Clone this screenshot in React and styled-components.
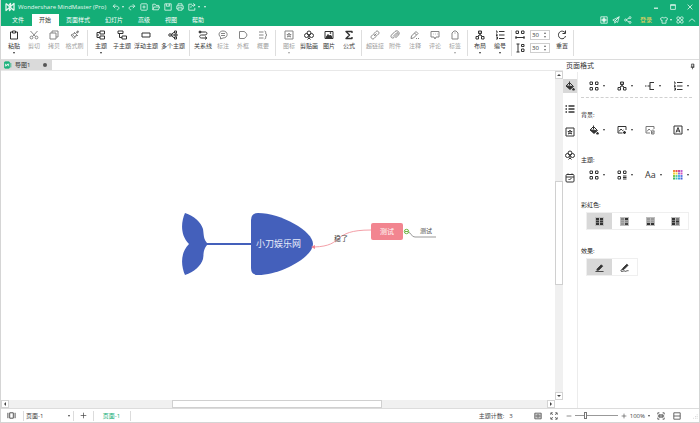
import React, { useState } from 'react';
import styled, { createGlobalStyle } from 'styled-components';

const GlobalStyle = createGlobalStyle`
  * {
    box-sizing: border-box;
  }

  body {
    margin: 0;
    background: #fff;
    color: #333;
    font-family: "Open Sans", "Noto Sans CJK SC", sans-serif;
    font-size: 6px;
    line-height: 8px;
  }

  button, input, select {
    margin: 0;
    padding: 0;
    border: 0;
    background: none;
    color: inherit;
    font: inherit;
  }

  svg {
    display: block;
    flex: none;
  }
`;

// All icons are drawn on a 20 x 20 grid
const icons = {
  logo: <path d="M2 3v14l7-6v6l3-3M18 17V3l-7 6V3L8 6M2 3l16 14" strokeWidth="2.6" />,
  undo: <path d="M8 3 3 8l5 5M3 8h8c8 0 8 9 1 9" />,
  redo: <path d="m12 3 5 5-5 5M17 8H9c-8 0-8 9-1 9" />,
  newFile: <><rect x="2" y="2" width="16" height="16" rx="2" /><path d="M10 6v8M6 10h8" /></>,
  open: <path d="M2 17V3h6l2 3h7v4M2 17l3-7h14l-3 7z" />,
  save: <path d="M2 2h16v16H2zM6 2v6h8V2M11 4v2" />,
  print: <><path d="M5 7V2h10v5M5 15H2V7h16v8h-3" /><path d="M5 12h10v6H5z" /></>,
  exportFile: <path d="M10 3H2v15h15v-6M7 12c0-5 4-7 10-7M13 1l5 4-5 4" />,
  minimize: <path d="M5 13h10" strokeWidth="3" />,
  maximize: <path d="M4 4h12v12H4zM4 6h12" />,
  close: <path d="m4 4 12 12M16 4 4 16" />,
  gift: <><rect x="2" y="2" width="16" height="16" /><path d="M10 2v16M2 10h16" /><rect x="7" y="7" width="6" height="6" fill="currentColor" /></>,
  send: <path d="M18 2 2 10l5 3zM7 13l11-11-4 14-5-3M7 13v5l3-4" />,
  share: <><circle cx="4" cy="10" r="2.5" /><circle cx="15" cy="4" r="2.5" /><circle cx="15" cy="16" r="2.5" /><path d="m6 9 7-4M6 11l7 4" /></>,
  shirt: <path d="M7 3 1 6l2 5 2-1v8h10v-8l2 1 2-5-6-3c-1 3-5 3-6 0z" />,
  apps: <><circle cx="5.5" cy="5.5" r="3.5" /><circle cx="14.5" cy="5.5" r="3.5" /><circle cx="5.5" cy="14.5" r="3.5" /><circle cx="14.5" cy="14.5" r="3.5" /></>,
  chevronUp: <path d="m2 14 8-7 8 7" />,
  paste: <><path d="M7 4H3v14h14V4h-4" /><path d="M7 2h6v4H7z" /></>,
  cut: <><circle cx="5" cy="15" r="2.8" /><circle cx="15" cy="15" r="2.8" /><path d="M3 2l10 11M17 2 7 13" /></>,
  copy: <path d="M6 6V2h12v12h-4M2 6h12v12H2z" />,
  brush: <><path d="m13 6 4-4" strokeWidth="4" /><path d="m8 4 8 8M10 6 2 10l6 7 6-7M5 12l3-2M8 14l3-3" /></>,
  topic: <><rect x="8" y="2" width="9" height="6" /><rect x="8" y="12" width="9" height="6" /><path d="M8 5H2v10h6M2 10h4" /></>,
  subtopic: <><rect x="2" y="2" width="10" height="5" /><rect x="10" y="12" width="9" height="6" /><path d="M5 7v8h5" /></>,
  floating: <rect x="2" y="6" width="16" height="8" />,
  multi: <><circle cx="4" cy="10" r="2.5" /><rect x="13" y="2" width="4" height="4" /><rect x="14" y="8" width="4" height="4" /><rect x="13" y="14" width="4" height="4" /><path d="m6 9 7-5M6 10h8M6 11l7 5" /></>,
  relation: <><path d="M5 4h10c4 0 4 6-1 6H7c-5 0-5 6 0 6h9" /><path d="m14 13 4 3-4 3" /><circle cx="4" cy="4" r="2" fill="currentColor" /></>,
  callout: <><path d="M10 2c11 0 11 14 0 14l-5 2v-4C-1 9 3 2 10 2z" /><path d="M6 7h8M6 11h8" /></>,
  boundary: <path d="M3 3h9c3 1 5 4 6 7-1 3-3 6-6 7H3z" />,
  summary: <path d="M2 4h9M2 10h9M2 16h9M13 2c5 0 0 7 5 8-5 1 0 8-5 8" />,
  mark: <><rect x="2" y="2" width="16" height="16" /><path d="m10 6 1 3h3l-2 2 1 3-3-2-3 2 1-3-2-2h3z" /></>,
  clipart: <><circle cx="10" cy="6" r="4" /><circle cx="5" cy="11" r="4" /><circle cx="15" cy="11" r="4" /><path d="M10 9v7l3 3M10 16l-3 3" /></>,
  picture: <><path d="M2 3h16v14H2z" /><path d="m4 15 4-6 3 3 2-2 3 5z" fill="currentColor" /><circle cx="13" cy="6" r="1" /></>,
  formula: <path d="M16 6V3H4l7 7-7 7h12v-3" strokeWidth="2.8" />,
  link: <path d="m8 12 5-5M9 6l3-3c3-3 8 2 5 5l-3 3c-2 2-4 1-5 0M11 14l-3 3c-3 3-8-2-5-5l3-3c2-2 4-1 5 0" />,
  attach: <path d="m6 13 7-7c2-2 4 0 2 2l-7 7c-4 3-8-1-5-5l7-7c5-4 11 2 7 7l-6 6" />,
  note: <path d="m12 3 4 4-9 9-5 1 1-5zM9 6l4 4M12 17h2M16 17h2" />,
  comment: <path d="M2 3h16v11h-6l-2 4-2-4H2zM6 8h1M10 8h1M14 8h1" />,
  tag: <><path d="M4 18V6l4-4h4l4 4v12z" /><path d="M9 6h2" /></>,
  layout: <><path d="M10 8v3M5 14l3-4h4l3 4" /><rect x="7" y="2" width="6" height="5" fill="currentColor" fillOpacity=".3" /><rect x="2" y="13" width="5" height="5" /><rect x="13" y="13" width="5" height="5" /></>,
  numbering: <><path d="M8 3h11M8 10h11M8 17h11" strokeWidth="2.4" /><path d="M2 2h2v4M2 8h2v3H2h3M2 14h3v4H2" /></>,
  hSpace: <path d="M2 2h5v5H2zM13 2h5v5h-5zM1 15h18M2 12v6M18 12v6" />,
  vSpace: <path d="M3 2h6M3 18h6M6 2v16M13 3h5v4h-5zM13 12h5v5h-5z" />,
  reset: <path d="M16 5c-6-6-14-1-13 6 1 8 12 9 14 1M17 1v6h-6" />,
  bucket: <><path d="m9 3 8 8-7 6-8-7zM9 1v8" /><path d="m4 10 11 1-5 5zM17 14l2 4h-4z" fill="currentColor" /></>,
  bullets: <path d="M7 4h12M7 10h12M7 16h12M1 4h3M1 10h3M1 16h3" strokeWidth="2.6" />,
  task: <><rect x="2" y="3" width="16" height="15" rx="2" /><path d="M2 8h16M6 1v3M14 1v3M7 12l2 2 4-4" /></>,
  layoutGrid: <path d="M2 2h5v5H2zM13 2h5v5h-5zM2 13h5v5H2zM13 13h5v5h-5z" />,
  branch: <path d="M0 10h3M5 10h5M18 3h-8v14h8" strokeWidth="2.2" />,
  addPicture: <><path d="M18 10V3H2v13h9M4 13l4-5 3 3 2-1" /><path d="M15 12v6M12 15h6" strokeWidth="2.6" /></>,
  removePicture: <g opacity=".65"><path d="M18 8V3H2v13h8M4 13l4-5 3 3" /><path d="M12 12h7M13 12v6h5v-6M15 10h2M15.5 14v3" /></g>,
  watermark: <><path d="M2 2h16v16H2z" /><path d="m6 15 4-10 4 10M7 12h6" /></>,
  styleGrid: <path d="M2 2h5v5H2zM13 2h5v5h-5zM2 13h5v5H2zM12 12h7M12 15h7M12 18h7" />,
  pin: <path d="M7 3h7v9H7zM5 12h10M10 12v6M12 3v9" />,
  presentation: <path d="M6 4h8v12H6zM2 4v12M18 4v12" />,
  plus: <path d="M10 2v16M2 10h16" />,
  minus: <path d="M2 10h16" />,
  fitPage: <path d="M2 3h16v14H2zM5 6v8M15 6v8M8 7h4v6H8z" />,
  fullScreen: <path d="M7 2H2v5M13 2h5v5M7 18H2v-5M13 18h5v-5M3 3l4 4M17 3l-4 4M3 17l4-4M17 17l-4-4" />,
  focus: <path d="M2 6V2h4M14 2h4v4M2 14v4h4M14 18h4v-4M5 7h10v6H5zM2 10h16" />,
  collapse: <path d="M2 2h16v16H2zM2 10h16" />,
  marker: <><path d="m5 13 9-9 3 3-9 9H4z" fill="currentColor" /><path d="M1 19h18" /></>,
  sketch: <><path d="m6 12 9-9 3 2-9 9-5 1z" fill="currentColor" /><path d="M4 15c-5 3 0 5 3 3s5 2 7 0 4 0 5-1" /></>,
  doc: <><rect x="1" y="2" width="13" height="16" rx="2" fill="#1bb27c" stroke="#1bb27c" /><path d="M17 5v11" stroke="#1bb27c" /><path d="M4 7v6l3-3v3M11 13V7l-3 3V7" stroke="#fff" /></>,
  grip: <path d="M15 3h3M15 10h3M8 10h3M15 17h3M8 17h3M1 17h3" strokeWidth="3" />,
};

const Icon = ({ name, size = 10 }) => (
  <svg
    width={size}
    height={size}
    viewBox="0 0 20 20"
    fill="none"
    stroke="currentColor"
    strokeWidth="2"
    strokeLinejoin="round"
    aria-hidden="true"
  >
    {icons[name]}
  </svg>
);

const Window = styled.div`
  display: flex;
  flex-direction: column;
  height: 100vh;
  border: 1px solid #d5d5d5;
  border-top: 0;
  overflow: hidden;
`;

const Header = styled.header`
  flex: none;
  margin: 0 -1px;
  background: #14ae77;
  color: #e5f7f0;
`;

const TitleBar = styled.div`
  display: flex;
  align-items: center;
  height: 14px;
  padding: 0 6px 0 5px;
`;

const AppTitle = styled.h1`
  margin: 0 6px 0 3px;
  font-size: 6px;
  font-weight: 400;
`;

const QuickTools = styled.div`
  display: flex;
  align-items: center;
  gap: 4px;
`;

const IconButton = styled.button`
  display: flex;
  align-items: center;
  justify-content: center;
  gap: ${(props) => props.$gap || 2}px;
  flex: none;
`;

const Caret = styled.span`
  flex: none;
  width: 0;
  height: 0;
  border: 1px solid transparent;
  border-top: 2px solid currentColor;
  border-bottom: 0;
`;

const WindowControls = styled.div`
  display: flex;
  gap: 9px;
  margin-left: auto;
`;

const MenuBar = styled.nav`
  display: flex;
  align-items: center;
  height: 12px;
  padding-left: 5px;
  padding-right: 4px;
`;

const MenuTab = styled.button`
  height: 12px;
  padding: 0 8px 0 7px;
  background: ${(props) => (props.$active ? '#fff' : 'transparent')};
  color: ${(props) => (props.$active ? '#333' : '#fff')};
  white-space: nowrap;
`;

const AccountTools = styled.div`
  display: flex;
  align-items: center;
  gap: 4px;
  margin-left: auto;
`;

const Login = styled.a`
  margin: 0 4px;
  color: #f4d35e;
  text-decoration: none;
`;

const Ribbon = styled.div`
  display: flex;
  flex: none;
  height: 34px;
  padding-top: 4px;
  border-bottom: 1px solid #dcdcdc;
`;

const RibbonGroup = styled.div`
  display: flex;
  height: 26px;
  padding: ${(props) => (props.$tight ? '0 1px 0 2px' : '0 2px 0 3px')};
  border-right: 1px solid #dedede;
`;

const ToolButton = styled.button`
  display: flex;
  flex-direction: column;
  align-items: center;
  width: ${(props) => props.$width || 20}px;
  color: #333;
  white-space: nowrap;

  &:disabled {
    color: #a0a0a0;
  }

  &:disabled svg {
    color: #858585;
  }
`;

const ToolLabel = styled.span`
  margin: 2px 0;
`;

const SpacingRows = styled.div`
  display: flex;
  flex-direction: column;
  gap: 3px;
  padding: 0 2px 0 1px;
`;

const SpacingField = styled.label`
  display: flex;
  align-items: center;
  gap: 5px;
`;

const SpinBox = styled.span`
  display: flex;
  align-items: center;
  width: 20px;
  height: 10px;
  padding: 0 3px 0 1px;
  border: 1px solid #cfcfcf;
`;

const SpinInput = styled.input`
  width: 100%;
  min-width: 0;
  outline: 0;
`;

const SpinArrows = styled.span`
  display: flex;
  flex-direction: column;
  gap: 2px;
  color: #666;

  ${Caret}:first-child {
    transform: rotate(180deg);
  }
`;

const Main = styled.main`
  display: flex;
  flex: 1;
  min-height: 0;
`;

const Workspace = styled.section`
  display: flex;
  flex: 1;
  flex-direction: column;
  min-width: 0;
`;

const DocTabs = styled.div`
  flex: none;
  height: 11px;
  border-bottom: 1px solid #e8e8e8;
`;

const DocTab = styled.button`
  display: flex;
  align-items: center;
  gap: 3px;
  width: 51px;
  height: 10px;
  padding: 0 5px 0 3px;
  background: #dadada;
`;

const Unsaved = styled.span`
  width: 4px;
  height: 4px;
  margin-left: auto;
  border-radius: 50%;
  background: #555;
`;

const CanvasRow = styled.div`
  display: flex;
  flex: 1;
  min-height: 0;
`;

const Canvas = styled.div`
  position: relative;
  flex: 1;
  overflow: hidden;
`;

const Stage = styled.div`
  position: absolute;
  top: 139px;
  left: 179px;
  width: 260px;
  height: 68px;
`;

const MapNode = styled.div`
  position: absolute;
  top: ${(props) => props.$y}px;
  left: ${(props) => props.$x}px;
  width: ${(props) => props.$width}px;
  color: ${(props) => props.$color || '#444'};
  font-size: ${(props) => props.$size || 6}px;
  line-height: ${(props) => props.$line || 8}px;
  text-align: center;
  white-space: nowrap;
  border-radius: 2px;
  background: ${(props) => props.$fill || 'transparent'};
`;

const ScrollTrack = styled.div`
  display: flex;
  flex: none;
  flex-direction: ${(props) => (props.$vertical ? 'column' : 'row')};
  ${(props) => (props.$vertical ? 'width: 8px;' : 'height: 8px; margin-right: 8px;')}
  background: #f0f0f0;
`;

const ScrollButton = styled.button`
  display: flex;
  align-items: center;
  justify-content: center;
  flex: none;
  width: 8px;
  height: 8px;
  border: 1px solid #d3d3d3;
  background: #fff;
  color: #444;

  span {
    border-width: 2px 2px 0;
    transform: rotate(${(props) => props.$turn}deg);
  }
`;

const ScrollGap = styled.div`
  flex: ${(props) => props.$grow};
`;

const ScrollThumb = styled.div`
  flex: ${(props) => props.$grow};
  border: 1px solid #d0d0d0;
  background: #fff;
`;

const Panel = styled.aside`
  display: flex;
  flex: none;
  flex-direction: column;
  width: 136px;
`;

const PanelHeader = styled.div`
  display: flex;
  align-items: center;
  justify-content: space-between;
  height: 12px;
  padding: 0 3px;
`;

const PanelTitle = styled.h2`
  margin: 0;
  font-size: 7px;
  font-weight: 400;
`;

const PanelBody = styled.div`
  display: flex;
  flex: 1;
  min-height: 0;
`;

const SideTabs = styled.div`
  display: flex;
  flex-direction: column;
  gap: 9px;
  width: 15px;
  padding-top: 7px;
  border-right: 1px solid #ececec;
`;

const SideTab = styled.button`
  display: flex;
  align-items: center;
  justify-content: center;
  height: 14px;
  background: ${(props) => (props.$active ? '#d8d8d8' : 'transparent')};
`;

const Settings = styled.div`
  flex: 1;
  padding: 8px 7px 0 3px;
`;

const OptionRow = styled.div`
  display: grid;
  grid-template-columns: 28px 28px 28px auto;
  align-items: center;
  justify-items: start;
  height: 12px;
  padding-left: 8px;
`;

const Divider = styled.hr`
  margin: 5px 0 0;
  border: 0;
  border-top: 1px dashed #d0d0d0;
`;

const SectionLabel = styled.h3`
  margin: ${(props) => props.$top}px 0 ${(props) => props.$bottom || 5}px;
  color: #222;
  font-size: 6px;
  font-weight: 400;
`;

const FontSample = styled.span`
  font-size: 9px;
  line-height: 12px;
`;

const Choices = styled.div`
  display: grid;
  grid-template-columns: repeat(${(props) => props.$count}, 1fr);
  width: ${(props) => props.$count * 25}%;
  border: 1px solid #efefef;
`;

const ChoiceArea = styled.div`
  padding: 0 3px 0 5px;
`;

const Choice = styled.button`
  display: flex;
  align-items: center;
  justify-content: center;
  height: 16px;
  background: ${(props) => (props.$active ? '#d8d8d8' : '#fff')};
`;

const StatusBar = styled.footer`
  display: flex;
  align-items: center;
  flex: none;
  height: 14px;
  border-top: 1px solid #dcdcdc;
  color: #444;
`;

const StatusCell = styled.div`
  display: flex;
  align-items: center;
  justify-content: center;
  width: ${(props) => props.$width}px;
  height: 10px;
  padding: 0 3px 0 2px;
  border-right: 1px solid #dcdcdc;
`;

const PageSelect = styled.select`
  flex: 1;
  appearance: none;
  outline: 0;
`;

const PageTab = styled.button`
  color: #14ae77;
`;

const StatusTools = styled.div`
  display: flex;
  align-items: center;
  margin-left: auto;
`;

const TopicCount = styled.span`
  display: flex;
  gap: 5px;
  margin-right: 21px;
`;

const ViewTools = styled.div`
  display: flex;
  gap: 8px;
  margin-right: 8px;
`;

const ZoomTools = styled.div`
  display: flex;
  align-items: center;
  gap: 3px;
  margin-right: 7px;
`;

const ZoomSlider = styled.input`
  width: 43px;
  height: 8px;
  appearance: none;

  &::-webkit-slider-runnable-track {
    height: 1px;
    background: #999;
  }

  &::-webkit-slider-thumb {
    width: 3px;
    height: 7px;
    margin-top: -3px;
    border: 1px solid #777;
    background: #fff;
    appearance: none;
  }
`;

const SizeGrip = styled.span`
  align-self: flex-end;
  margin: 0 1px 1px 4px;
  color: #bbb;
`;

const menuTabs = ['文件', '开始', '页面样式', '幻灯片', '高级', '视图', '帮助'];

const ribbonGroups = [
  [
    { label: '粘贴', icon: 'paste', menu: true },
    { label: '剪切', icon: 'cut', disabled: true },
    { label: '拷贝', icon: 'copy', disabled: true },
    { label: '格式刷', icon: 'brush', disabled: true, width: 21 },
  ],
  [
    { label: '主题', icon: 'topic', menu: true },
    { label: '子主题', icon: 'subtopic', width: 22 },
    { label: '浮动主题', icon: 'floating', width: 26 },
    { label: '多个主题', icon: 'multi', width: 28 },
  ],
  [
    { label: '关系线', icon: 'relation' },
    { label: '标注', icon: 'callout', disabled: true },
    { label: '外框', icon: 'boundary', disabled: true },
    { label: '概要', icon: 'summary', disabled: true },
  ],
  [
    { label: '图标', icon: 'mark', disabled: true, menu: true },
    { label: '剪贴画', icon: 'clipart' },
    { label: '图片', icon: 'picture' },
    { label: '公式', icon: 'formula' },
  ],
  [
    { label: '超链接', icon: 'link', disabled: true },
    { label: '附件', icon: 'attach', disabled: true },
    { label: '注释', icon: 'note', disabled: true },
    { label: '评论', icon: 'comment', disabled: true },
    { label: '标签', icon: 'tag', disabled: true, menu: true },
  ],
];

const sideTabs = [
  { label: '页面格式', icon: 'bucket' },
  { label: '大纲', icon: 'bullets' },
  { label: '图标', icon: 'mark' },
  { label: '剪贴画', icon: 'clipart' },
  { label: '任务', icon: 'task' },
];

const swatches = [
  '#f08a3c', '#e8544f', '#d24a9a', '#c05fd0',
  '#f5d03b', '#f5e04c', '#8d74dd', '#d45ac0',
  '#7ec850', '#5ccf9a', '#4fb4ee', '#5a7fe8',
  '#46b85a', '#42c8b8', '#3f9ae8', '#4660d8',
];

const rainbowModes = [
  ['#333', '#333', '#333', '#333', '#333', '#333'],
  ['#888', '#333', '#999', '#888', '#999', '#444'],
  ['#999', '#999', '#999', '#999', '#333', '#333'],
  ['#333', '#777', '#333', '#333', '#333', '#777'],
];

const Swatches = () => (
  <svg width="10" height="10" viewBox="0 0 20 20" aria-hidden="true">
    {swatches.map((color, i) => (
      <rect key={i} x={(i % 4) * 5} y={Math.floor(i / 4) * 5} width="4" height="4" fill={color} />
    ))}
  </svg>
);

const RainbowIcon = ({ colors }) => (
  <svg width="9" height="9" viewBox="0 0 18 18" aria-hidden="true">
    <rect width="18" height="18" fill="#bdbdbd" />
    {colors.map((color, i) => (
      <rect key={i} x={i % 2 ? 10 : 2} y={2 + Math.floor(i / 2) * 5} width="6" height="4" fill={color} />
    ))}
  </svg>
);

const Tool = ({ label, icon, menu, disabled, width }) => (
  <ToolButton disabled={disabled} $width={width}>
    <Icon name={icon} />
    <ToolLabel>{label}</ToolLabel>
    {menu && <Caret />}
  </ToolButton>
);

const Option = ({ icon, label, menu = true, children }) => (
  <IconButton aria-label={label} $gap={4}>
    {children || <Icon name={icon} />}
    {menu && <Caret />}
  </IconButton>
);

const Spacing = ({ icon, label }) => (
  <SpacingField>
    <Icon name={icon} />
    <SpinBox>
      <SpinInput aria-label={label} defaultValue="30" />
      <SpinArrows>
        <Caret />
        <Caret />
      </SpinArrows>
    </SpinBox>
  </SpacingField>
);

const MindMap = () => (
  <Stage>
    <svg width="260" height="68" viewBox="0 0 260 68" fill="none" aria-hidden="true">
      <path
        fill="#4460bb"
        d="M5 3C1 12 0 25 9 34C0 43 1 56 5 65C14 62 21 56 23 49C24 43 23 39 28 34C23 29 24 25 23 19C21 12 14 6 5 3Z"
      />
      <path stroke="#4460bb" strokeWidth="2" d="M26 34h47" />
      <path fill="#4460bb" d="M71 10Q71 3 78 3C101 3 133 21 133 34C133 47 101 65 78 65Q71 65 71 58Z" />
      <path stroke="#f4a0a8" d="M134 37C166 36 150 20 191 20" />
      <path fill="#f28590" d="m131 37 4-2v4z" />
      <path stroke="#999" d="M228 22C232 23 231 27 235 27H256" />
      <circle cx="226.5" cy="21.5" r="2.2" fill="#fff" stroke="#6fb544" />
      <path stroke="#6fb544" d="M225 21.5h3" />
    </svg>
    <MapNode $x={71} $y={28} $width={55} $size={9} $line={12} $color="#e8ecfa">小刀娱乐网</MapNode>
    <MapNode $x={153} $y={25} $width={16} $size={7}>稳了</MapNode>
    <MapNode $x={191} $y={13} $width={32} $size={7} $line={17} $color="#fff" $fill="#f28590">测试</MapNode>
    <MapNode $x={238} $y={17} $width={16}>测试</MapNode>
  </Stage>
);

const FormatPanel = () => {
  const [tab, setTab] = useState(0);
  const [rainbow, setRainbow] = useState(0);
  const [effect, setEffect] = useState(0);

  return (
    <Panel>
      <PanelHeader>
        <PanelTitle>页面格式</PanelTitle>
        <IconButton aria-label="固定"><Icon name="pin" size={7} /></IconButton>
      </PanelHeader>
      <PanelBody>
        <SideTabs>
          {sideTabs.map((item, i) => (
            <SideTab key={item.label} aria-label={item.label} $active={tab === i} onClick={() => setTab(i)}>
              <Icon name={item.icon} />
            </SideTab>
          ))}
        </SideTabs>
        <Settings>
          <OptionRow>
            <Option icon="layoutGrid" label="版式" />
            <Option icon="layout" label="布局" />
            <Option icon="branch" label="连接线样式" />
            <Option icon="numbering" label="编号" />
          </OptionRow>
          <Divider />
          <SectionLabel $top={13}>背景:</SectionLabel>
          <OptionRow>
            <Option icon="bucket" label="背景颜色" />
            <Option icon="addPicture" label="背景图片" />
            <Option icon="removePicture" label="移除背景图片" menu={false} />
            <Option icon="watermark" label="水印" />
          </OptionRow>
          <SectionLabel $top={20}>主题:</SectionLabel>
          <OptionRow>
            <Option icon="layoutGrid" label="主题" />
            <Option icon="styleGrid" label="主题样式" />
            <Option label="主题字体"><FontSample>Aa</FontSample></Option>
            <Option label="主题颜色"><Swatches /></Option>
          </OptionRow>
          <SectionLabel $top={20} $bottom={3}>彩虹色:</SectionLabel>
          <ChoiceArea>
            <Choices $count={4}>
              {rainbowModes.map((colors, i) => (
                <Choice key={i} aria-label={`彩虹色 ${i + 1}`} $active={rainbow === i} onClick={() => setRainbow(i)}>
                  <RainbowIcon colors={colors} />
                </Choice>
              ))}
            </Choices>
          </ChoiceArea>
          <SectionLabel $top={17} $bottom={3}>效果:</SectionLabel>
          <ChoiceArea>
            <Choices $count={2}>
              {['marker', 'sketch'].map((name, i) => (
                <Choice key={name} aria-label={name} $active={effect === i} onClick={() => setEffect(i)}>
                  <Icon name={name} size={9} />
                </Choice>
              ))}
            </Choices>
          </ChoiceArea>
        </Settings>
      </PanelBody>
    </Panel>
  );
};

const App = () => {
  const [menu, setMenu] = useState('开始');

  return (
    <Window>
      <GlobalStyle />
      <Header>
        <TitleBar>
          <Icon name="logo" />
          <AppTitle>Wondershare MindMaster (Pro)</AppTitle>
          <QuickTools>
            <IconButton aria-label="撤销"><Icon name="undo" size={8} /><Caret /></IconButton>
            <IconButton aria-label="重做"><Icon name="redo" size={8} /></IconButton>
            <IconButton aria-label="新建"><Icon name="newFile" size={8} /></IconButton>
            <IconButton aria-label="打开"><Icon name="open" size={8} /></IconButton>
            <IconButton aria-label="保存"><Icon name="save" size={8} /></IconButton>
            <IconButton aria-label="打印"><Icon name="print" size={8} /></IconButton>
            <IconButton aria-label="导出"><Icon name="exportFile" size={8} /><Caret /></IconButton>
            <IconButton aria-label="更多"><Caret /></IconButton>
          </QuickTools>
          <WindowControls>
            <IconButton aria-label="最小化"><Icon name="minimize" size={8} /></IconButton>
            <IconButton aria-label="最大化"><Icon name="maximize" size={8} /></IconButton>
            <IconButton aria-label="关闭"><Icon name="close" size={8} /></IconButton>
          </WindowControls>
        </TitleBar>
        <MenuBar>
          {menuTabs.map((name) => (
            <MenuTab key={name} $active={menu === name} onClick={() => setMenu(name)}>{name}</MenuTab>
          ))}
          <AccountTools>
            <IconButton aria-label="礼物"><Icon name="gift" size={8} /></IconButton>
            <IconButton aria-label="发送"><Icon name="send" size={8} /></IconButton>
            <IconButton aria-label="分享"><Icon name="share" size={8} /></IconButton>
            <Login href="#login">登录</Login>
            <IconButton aria-label="皮肤"><Icon name="shirt" size={8} /><Caret /></IconButton>
            <IconButton aria-label="应用"><Icon name="apps" size={8} /></IconButton>
            <IconButton aria-label="收起"><Icon name="chevronUp" size={8} /></IconButton>
          </AccountTools>
        </MenuBar>
      </Header>

      <Ribbon>
        {ribbonGroups.map((group, i) => (
          <RibbonGroup key={i}>
            {group.map((tool) => <Tool key={tool.label} {...tool} />)}
          </RibbonGroup>
        ))}
        <RibbonGroup $tight>
          <Tool label="布局" icon="layout" menu />
          <Tool label="编号" icon="numbering" menu />
        </RibbonGroup>
        <RibbonGroup $tight>
          <SpacingRows>
            <Spacing icon="hSpace" label="水平间距" />
            <Spacing icon="vSpace" label="垂直间距" />
          </SpacingRows>
          <Tool label="重置" icon="reset" />
        </RibbonGroup>
      </Ribbon>

      <Main>
        <Workspace>
          <DocTabs>
            <DocTab>
              <Icon name="doc" size={8} />
              导图1
              <Unsaved />
            </DocTab>
          </DocTabs>
          <CanvasRow>
            <Canvas>
              <MindMap />
            </Canvas>
            <ScrollTrack $vertical>
              <ScrollButton aria-label="向上" $turn={180}><Caret /></ScrollButton>
              <ScrollGap $grow={103} />
              <ScrollThumb $grow={102} />
              <ScrollGap $grow={108} />
              <ScrollButton aria-label="向下" $turn={0}><Caret /></ScrollButton>
            </ScrollTrack>
          </CanvasRow>
          <ScrollTrack>
            <ScrollButton aria-label="向左" $turn={90}><Caret /></ScrollButton>
            <ScrollGap $grow={164} />
            <ScrollThumb $grow={208} />
            <ScrollGap $grow={166} />
            <ScrollButton aria-label="向右" $turn={-90}><Caret /></ScrollButton>
          </ScrollTrack>
        </Workspace>
        <FormatPanel />
      </Main>

      <StatusBar>
        <StatusCell $width={23}>
          <IconButton aria-label="演示"><Icon name="presentation" size={9} /></IconButton>
        </StatusCell>
        <StatusCell $width={50}>
          <PageSelect aria-label="页面">
            <option>页面-1</option>
          </PageSelect>
          <Caret />
        </StatusCell>
        <StatusCell $width={20}>
          <IconButton aria-label="新建页面"><Icon name="plus" size={7} /></IconButton>
        </StatusCell>
        <StatusCell $width={37}>
          <PageTab>页面-1</PageTab>
        </StatusCell>
        <StatusTools>
          <TopicCount><span>主题计数:</span><span>3</span></TopicCount>
          <ViewTools>
            <IconButton aria-label="适合页面"><Icon name="fitPage" size={8} /></IconButton>
            <IconButton aria-label="全屏"><Icon name="fullScreen" size={8} /></IconButton>
          </ViewTools>
          <ZoomTools>
            <IconButton aria-label="缩小"><Icon name="minus" size={6} /></IconButton>
            <ZoomSlider type="range" aria-label="缩放" min="0" max="400" defaultValue="90" />
            <IconButton aria-label="放大"><Icon name="plus" size={6} /></IconButton>
            <IconButton $gap={3}>100%<Caret /></IconButton>
          </ZoomTools>
          <ViewTools>
            <IconButton aria-label="聚焦"><Icon name="focus" size={8} /></IconButton>
            <IconButton aria-label="折叠"><Icon name="collapse" size={8} /></IconButton>
          </ViewTools>
          <SizeGrip><Icon name="grip" size={5} /></SizeGrip>
        </StatusTools>
      </StatusBar>
    </Window>
  );
};

export default App;
